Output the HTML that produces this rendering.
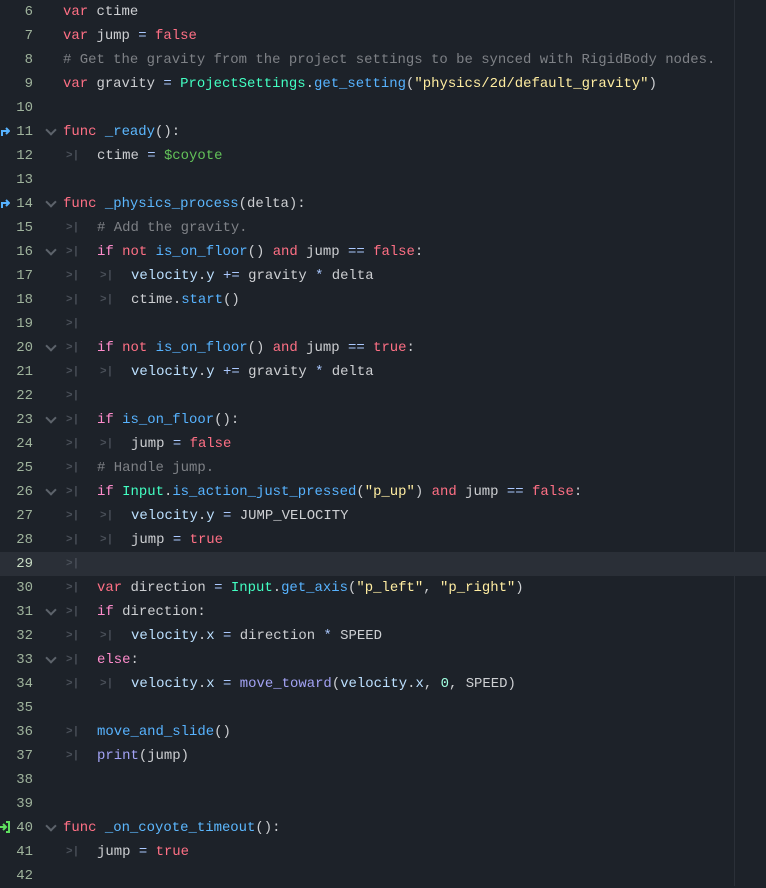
<!DOCTYPE html>
<html><head><meta charset="utf-8"><style>
body{margin:0;width:766px;height:886px;background:#1d2229;overflow:hidden;font-family:"Liberation Mono",monospace;font-size:13.95px;position:relative}
.l{position:absolute;left:0;width:766px;height:24px;line-height:24px;white-space:pre;color:#cdcfd2}
.cur{background:#2a2f37}
.n{position:absolute;left:0;width:33px;text-align:right;color:#9fb39c}
.cur .n{color:#c8dcc4}
.c{position:absolute;left:63px}
.f{position:absolute;left:47px;width:6px;height:6px;border-right:2px solid #5d636b;border-bottom:2px solid #5d636b;transform:rotate(45deg);top:6px}
.t{position:absolute;top:0;color:#4a5059;font-size:11px;font-weight:bold}
.k{color:#ff7085}.cf{color:#ff8ccc}.fn{color:#57b3ff}.df{color:#5cb8ff}.s{color:#ffeda1}.ty{color:#42ffc2}.cm{color:#7e8186}.np{color:#63c259}.m{color:#bce0ff}.g{color:#a3a3f5}.op{color:#abc9ff}.nu{color:#a1ffe0}
.vl{position:absolute;left:734px;top:0;width:1px;height:886px;background:#2b3038}
.ic{position:absolute;left:0;top:5px;width:10px;height:12px}
</style></head><body>
<div class="vl"></div>
<div class="l" style="top:0"><span class="n">6</span><span class="c"><span class="k">var</span> ctime</span></div>
<div class="l" style="top:24px"><span class="n">7</span><span class="c"><span class="k">var</span> jump <span class="op">=</span> <span class="k">false</span></span></div>
<div class="l" style="top:48px"><span class="n">8</span><span class="c"><span class="cm"># Get the gravity from the project settings to be synced with RigidBody nodes.</span></span></div>
<div class="l" style="top:72px"><span class="n">9</span><span class="c"><span class="k">var</span> gravity <span class="op">=</span> <span class="ty">ProjectSettings</span>.<span class="fn">get_setting</span>(<span class="s">"physics/2d/default_gravity"</span>)</span></div>
<div class="l" style="top:96px"><span class="n">10</span></div>
<div class="l" style="top:120px"><svg class="ic" viewBox="0 0 10 12"><path d="M2 11V6h6M6 3l3 3-3 3" fill="none" stroke="#57b3ff" stroke-width="2"/></svg><span class="n">11</span><span class="f"></span><span class="c"><span class="k">func</span> <span class="df">_ready</span>():</span></div>
<div class="l" style="top:144px"><span class="n">12</span><span class="t" style="left:66px">&gt;|</span><span class="c" style="left:97px">ctime <span class="op">=</span> <span class="np">$coyote</span></span></div>
<div class="l" style="top:168px"><span class="n">13</span></div>
<div class="l" style="top:192px"><svg class="ic" viewBox="0 0 10 12"><path d="M2 11V6h6M6 3l3 3-3 3" fill="none" stroke="#57b3ff" stroke-width="2"/></svg><span class="n">14</span><span class="f"></span><span class="c"><span class="k">func</span> <span class="df">_physics_process</span>(delta):</span></div>
<div class="l" style="top:216px"><span class="n">15</span><span class="t" style="left:66px">&gt;|</span><span class="c" style="left:97px"><span class="cm"># Add the gravity.</span></span></div>
<div class="l" style="top:240px"><span class="n">16</span><span class="f"></span><span class="t" style="left:66px">&gt;|</span><span class="c" style="left:97px"><span class="cf">if</span> <span class="k">not</span> <span class="fn">is_on_floor</span>() <span class="k">and</span> jump <span class="op">==</span> <span class="k">false</span>:</span></div>
<div class="l" style="top:264px"><span class="n">17</span><span class="t" style="left:66px">&gt;|</span><span class="t" style="left:100px">&gt;|</span><span class="c" style="left:131px"><span class="m">velocity</span>.<span class="m">y</span> <span class="op">+=</span> gravity <span class="op">*</span> delta</span></div>
<div class="l" style="top:288px"><span class="n">18</span><span class="t" style="left:66px">&gt;|</span><span class="t" style="left:100px">&gt;|</span><span class="c" style="left:131px">ctime.<span class="fn">start</span>()</span></div>
<div class="l" style="top:312px"><span class="n">19</span><span class="t" style="left:66px">&gt;|</span></div>
<div class="l" style="top:336px"><span class="n">20</span><span class="f"></span><span class="t" style="left:66px">&gt;|</span><span class="c" style="left:97px"><span class="cf">if</span> <span class="k">not</span> <span class="fn">is_on_floor</span>() <span class="k">and</span> jump <span class="op">==</span> <span class="k">true</span>:</span></div>
<div class="l" style="top:360px"><span class="n">21</span><span class="t" style="left:66px">&gt;|</span><span class="t" style="left:100px">&gt;|</span><span class="c" style="left:131px"><span class="m">velocity</span>.<span class="m">y</span> <span class="op">+=</span> gravity <span class="op">*</span> delta</span></div>
<div class="l" style="top:384px"><span class="n">22</span><span class="t" style="left:66px">&gt;|</span></div>
<div class="l" style="top:408px"><span class="n">23</span><span class="f"></span><span class="t" style="left:66px">&gt;|</span><span class="c" style="left:97px"><span class="cf">if</span> <span class="fn">is_on_floor</span>():</span></div>
<div class="l" style="top:432px"><span class="n">24</span><span class="t" style="left:66px">&gt;|</span><span class="t" style="left:100px">&gt;|</span><span class="c" style="left:131px">jump <span class="op">=</span> <span class="k">false</span></span></div>
<div class="l" style="top:456px"><span class="n">25</span><span class="t" style="left:66px">&gt;|</span><span class="c" style="left:97px"><span class="cm"># Handle jump.</span></span></div>
<div class="l" style="top:480px"><span class="n">26</span><span class="f"></span><span class="t" style="left:66px">&gt;|</span><span class="c" style="left:97px"><span class="cf">if</span> <span class="ty">Input</span>.<span class="fn">is_action_just_pressed</span>(<span class="s">"p_up"</span>) <span class="k">and</span> jump <span class="op">==</span> <span class="k">false</span>:</span></div>
<div class="l" style="top:504px"><span class="n">27</span><span class="t" style="left:66px">&gt;|</span><span class="t" style="left:100px">&gt;|</span><span class="c" style="left:131px"><span class="m">velocity</span>.<span class="m">y</span> <span class="op">=</span> JUMP_VELOCITY</span></div>
<div class="l" style="top:528px"><span class="n">28</span><span class="t" style="left:66px">&gt;|</span><span class="t" style="left:100px">&gt;|</span><span class="c" style="left:131px">jump <span class="op">=</span> <span class="k">true</span></span></div>
<div class="l cur" style="top:552px"><span class="n">29</span><span class="t" style="left:66px">&gt;|</span></div>
<div class="l" style="top:576px"><span class="n">30</span><span class="t" style="left:66px">&gt;|</span><span class="c" style="left:97px"><span class="k">var</span> direction <span class="op">=</span> <span class="ty">Input</span>.<span class="fn">get_axis</span>(<span class="s">"p_left"</span>, <span class="s">"p_right"</span>)</span></div>
<div class="l" style="top:600px"><span class="n">31</span><span class="f"></span><span class="t" style="left:66px">&gt;|</span><span class="c" style="left:97px"><span class="cf">if</span> direction:</span></div>
<div class="l" style="top:624px"><span class="n">32</span><span class="t" style="left:66px">&gt;|</span><span class="t" style="left:100px">&gt;|</span><span class="c" style="left:131px"><span class="m">velocity</span>.<span class="m">x</span> <span class="op">=</span> direction <span class="op">*</span> SPEED</span></div>
<div class="l" style="top:648px"><span class="n">33</span><span class="f"></span><span class="t" style="left:66px">&gt;|</span><span class="c" style="left:97px"><span class="cf">else</span>:</span></div>
<div class="l" style="top:672px"><span class="n">34</span><span class="t" style="left:66px">&gt;|</span><span class="t" style="left:100px">&gt;|</span><span class="c" style="left:131px"><span class="m">velocity</span>.<span class="m">x</span> <span class="op">=</span> <span class="g">move_toward</span>(<span class="m">velocity</span>.<span class="m">x</span>, <span class="nu">0</span>, SPEED)</span></div>
<div class="l" style="top:696px"><span class="n">35</span></div>
<div class="l" style="top:720px"><span class="n">36</span><span class="t" style="left:66px">&gt;|</span><span class="c" style="left:97px"><span class="fn">move_and_slide</span>()</span></div>
<div class="l" style="top:744px"><span class="n">37</span><span class="t" style="left:66px">&gt;|</span><span class="c" style="left:97px"><span class="g">print</span>(jump)</span></div>
<div class="l" style="top:768px"><span class="n">38</span></div>
<div class="l" style="top:792px"><span class="n">39</span></div>
<div class="l" style="top:816px"><svg class="ic" viewBox="0 0 10 12"><path d="M0 6h5M3 3l3 3-3 3M6 1h3v10H6" fill="none" stroke="#5fe05f" stroke-width="2"/></svg><span class="n">40</span><span class="f"></span><span class="c"><span class="k">func</span> <span class="df">_on_coyote_timeout</span>():</span></div>
<div class="l" style="top:840px"><span class="n">41</span><span class="t" style="left:66px">&gt;|</span><span class="c" style="left:97px">jump <span class="op">=</span> <span class="k">true</span></span></div>
<div class="l" style="top:864px"><span class="n">42</span></div>
</body></html>
